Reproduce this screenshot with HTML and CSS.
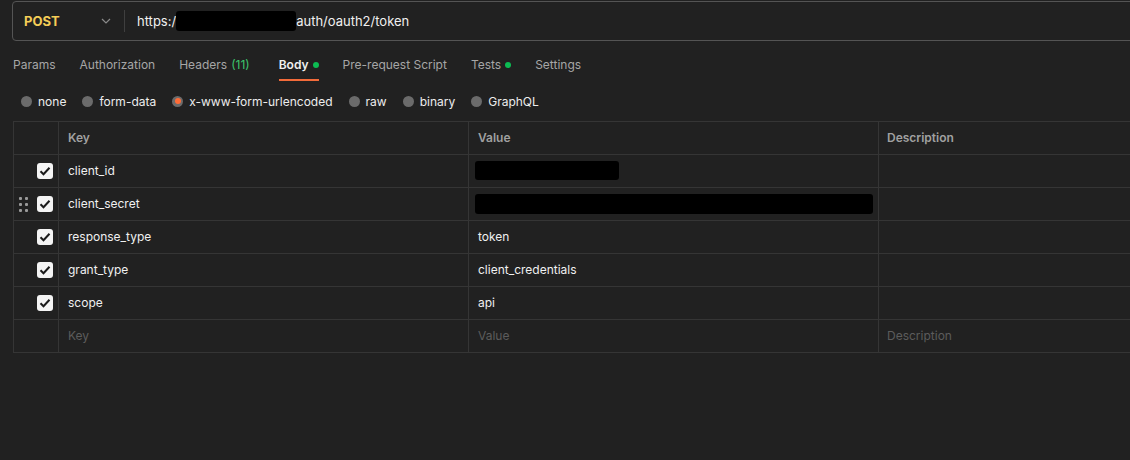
FILE: index.html
```html
<!DOCTYPE html>
<html>
<head>
<meta charset="utf-8">
<link rel="stylesheet" href="styles.css">
</head>
<body>
<div class="page">
  <div class="urlbar">
    <div class="method">
      <span class="method-name">POST</span>
      <svg class="chev" width="10" height="6" viewBox="0 0 10 6"><path d="M1 1l4 4 4-4" fill="none" stroke="#8a8a8a" stroke-width="1.2"/></svg>
    </div>
    <div class="divider"></div>
    <div class="url"><span>https:/</span><span class="redact redact-url"></span><span>auth/oauth2/token</span></div>
  </div>

  <div class="tabs">
    <span class="tab">Params</span>
    <span class="tab">Authorization</span>
    <span class="tab tab-headers">Headers <span class="count">(11)</span></span>
    <span class="tab active">Body <span class="dot"></span></span>
    <span class="tab">Pre-request Script</span>
    <span class="tab">Tests <span class="dot"></span></span>
    <span class="tab">Settings</span>
  </div>

  <div class="radios">
    <label class="radio"><span class="circle"></span>none</label>
    <label class="radio"><span class="circle"></span>form-data</label>
    <label class="radio"><span class="circle on"></span>x-www-form-urlencoded</label>
    <label class="radio"><span class="circle"></span>raw</label>
    <label class="radio"><span class="circle"></span>binary</label>
    <label class="radio"><span class="circle"></span>GraphQL</label>
  </div>

  <div class="table">
    <div class="row head">
      <div class="cell c0"></div>
      <div class="cell c1">Key</div>
      <div class="cell c2">Value</div>
      <div class="cell c3">Description</div>
    </div>
    <div class="row">
      <div class="cell c0"><span class="cb"><svg width="12" height="10" viewBox="0 0 12 10"><path d="M1.5 5.2l3 3 6-6.5" fill="none" stroke="#1a1a1a" stroke-width="2"/></svg></span></div>
      <div class="cell c1">client_id</div>
      <div class="cell c2"><span class="redact redact-v1"></span></div>
      <div class="cell c3"></div>
    </div>
    <div class="row">
      <div class="cell c0"><span class="grip"><i></i><i></i><i></i><i></i><i></i><i></i></span><span class="cb"><svg width="12" height="10" viewBox="0 0 12 10"><path d="M1.5 5.2l3 3 6-6.5" fill="none" stroke="#1a1a1a" stroke-width="2"/></svg></span></div>
      <div class="cell c1">client_secret</div>
      <div class="cell c2"><span class="redact redact-v2"></span></div>
      <div class="cell c3"></div>
    </div>
    <div class="row">
      <div class="cell c0"><span class="cb"><svg width="12" height="10" viewBox="0 0 12 10"><path d="M1.5 5.2l3 3 6-6.5" fill="none" stroke="#1a1a1a" stroke-width="2"/></svg></span></div>
      <div class="cell c1">response_type</div>
      <div class="cell c2">token</div>
      <div class="cell c3"></div>
    </div>
    <div class="row">
      <div class="cell c0"><span class="cb"><svg width="12" height="10" viewBox="0 0 12 10"><path d="M1.5 5.2l3 3 6-6.5" fill="none" stroke="#1a1a1a" stroke-width="2"/></svg></span></div>
      <div class="cell c1">grant_type</div>
      <div class="cell c2">client_credentials</div>
      <div class="cell c3"></div>
    </div>
    <div class="row">
      <div class="cell c0"><span class="cb"><svg width="12" height="10" viewBox="0 0 12 10"><path d="M1.5 5.2l3 3 6-6.5" fill="none" stroke="#1a1a1a" stroke-width="2"/></svg></span></div>
      <div class="cell c1">scope</div>
      <div class="cell c2">api</div>
      <div class="cell c3"></div>
    </div>
    <div class="row placeholder">
      <div class="cell c0"></div>
      <div class="cell c1">Key</div>
      <div class="cell c2">Value</div>
      <div class="cell c3">Description</div>
    </div>
  </div>
</div>
</body>
</html>
```

FILE: styles.css
```css
html, body {
  margin: 0;
  padding: 0;
  background: #212121;
  overflow: hidden;
}
body {
  width: 1130px;
  height: 460px;
  font-family: Inter, "Noto Sans", sans-serif;
  font-size: 12px;
  color: #f0f0f0;
}
.page {
  padding: 1px 0 0 12px;
}
.urlbar {
  display: flex;
  align-items: center;
  height: 38px;
  width: 1130px;
  border: 1px solid #545454;
  border-radius: 4px;
  box-sizing: content-box;
  font-size: 13px;
}
.method {
  display: flex;
  align-items: center;
  width: 98px;
  padding-left: 11px;
  box-sizing: border-box;
}
.method-name {
  color: #f5cd57;
  font-weight: 700;
  font-size: 13px;
  width: 77px;
}
.chev { display: block; }
.divider {
  width: 1px;
  height: 22px;
  background: #3f3f3f;
  margin-left: 13px;
}
.url {
  display: flex;
  align-items: center;
  margin-left: 12px;
  color: #f0f0f0;
}
.redact {
  display: inline-block;
  background: #000;
  border-radius: 3px;
}
.redact-url {
  width: 120px;
  height: 20px;
  margin-left: 0;
}
.tabs {
  display: flex;
  gap: 24px;
  margin-top: 14px;
  height: 26px;
  padding-left: 1px;
  font-size: 12px;
}
.tab {
  color: #a6a6a6;
  line-height: 18px;
  display: flex;
  align-items: flex-start;
  gap: 4px;
  position: relative;
  height: 26px;
  padding-top: 1px;
  box-sizing: border-box;
}
.tab-headers { margin-right: 5px; }
.tab .count { color: #3dc46c; }
.tab.active {
  color: #f0f0f0;
  font-weight: 600;
}
.tab.active::after {
  content: "";
  position: absolute;
  left: 0;
  right: 0;
  bottom: 0;
  height: 2px;
  background: #f26b3a;
}
.dot {
  width: 6px;
  height: 6px;
  border-radius: 50%;
  background: #0cbb52;
  margin-top: 6px;
}
.radios {
  display: flex;
  gap: 16px;
  margin-top: 10px;
  height: 20px;
  align-items: center;
  padding-left: 9px;
  font-size: 12px;
  font-weight: 400;
  color: #ededed;
}
.radio {
  display: flex;
  align-items: center;
  gap: 6px;
}
.circle {
  width: 11px;
  height: 11px;
  border-radius: 50%;
  background: #6b6b6b;
  position: relative;
}
.circle.on::after {
  content: "";
  position: absolute;
  left: 2.5px;
  top: 2.5px;
  width: 6px;
  height: 6px;
  border-radius: 50%;
  background: #ff6c37;
}
.table {
  margin-top: 10px;
  margin-left: 1px;
  border-top: 1px solid #353535;
  border-left: 1px solid #353535;
  width: 1130px;
  font-size: 12px;
}
.row {
  display: flex;
  height: 33px;
  border-bottom: 1px solid #353535;
  box-sizing: border-box;
}
.cell {
  display: flex;
  align-items: center;
  border-right: 1px solid #353535;
  box-sizing: border-box;
  padding-left: 9px;
  padding-bottom: 1px;
}
.c0 { width: 45px; padding-left: 0; justify-content: flex-end; padding-right: 5px; gap: 9px; padding-bottom: 0; }
.c1 { width: 410px; }
.c2 { width: 410px; padding-left: 9px; }
.c3 { flex: 1; border-right: none; padding-left: 8px; }
.head .cell {
  color: #a0a0a0;
  font-size: 12px;
  font-weight: 600;
}
.placeholder .cell { color: #5c5c5c; }
.cb {
  width: 16px;
  height: 16px;
  background: #f4f4f4;
  border-radius: 3px;
  display: flex;
  align-items: center;
  justify-content: center;
}
.grip {
  display: grid;
  grid-template-columns: 3px 3px;
  grid-template-rows: 3px 3px 3px;
  column-gap: 3px;
  row-gap: 3px;
}
.grip i {
  width: 3px;
  height: 3px;
  background: #9a9a9a;
  border-radius: 1px;
}
.redact-v1 { width: 144px; height: 19px; margin-left: -3px; }
.redact-v2 { width: 398px; height: 20px; margin-left: -3px; }
```
